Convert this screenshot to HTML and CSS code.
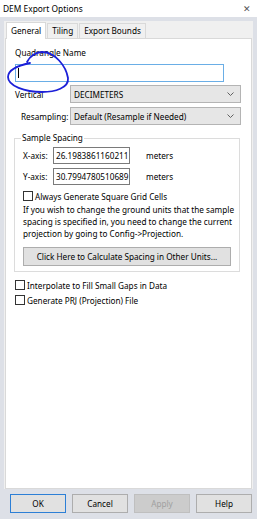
FILE: index.html
```html
<!doctype html>
<html lang="en">
    <head>
        <meta charset="UTF-8" />
        <title>DEM Export Options</title>
        <link rel="stylesheet" href="styles.css">
    </head>
    <body>
        <div class="window">
            <!-- Title bar -->
            <div class="titlebar">
                <span class="title">DEM Export Options</span>
                <span class="close">&#x2715;</span>
            </div>

            <div class="dialog">
                <div class="tabctl">
                    <div class="tabs">
                        <div class="tab active">General</div>
                        <div class="tab">Tiling</div>
                        <div class="tab">Export Bounds</div>
                    </div>

                    <div class="panel">
                        <div class="field-label">Quadrangle Name</div>
                        <div class="textbox focused"><span class="caret"></span></div>

                        <div class="row">
                            <span class="row-label">Vertical</span>
                            <div class="combo">
                                <span>DECIMETERS</span>
                                <svg class="chev" width="7" height="4" viewBox="0 0 7 4"><path d="M0.5 0.5 L3.5 3.5 L6.5 0.5" fill="none" stroke="#606060" stroke-width="1"/></svg>
                            </div>
                        </div>

                        <div class="row second">
                            <span class="row-label indent">Resampling:</span>
                            <div class="combo">
                                <span>Default (Resample if Needed)</span>
                                <svg class="chev" width="7" height="4" viewBox="0 0 7 4"><path d="M0.5 0.5 L3.5 3.5 L6.5 0.5" fill="none" stroke="#606060" stroke-width="1"/></svg>
                            </div>
                        </div>

                        <!-- Sample spacing group -->
                        <fieldset class="group">
                            <legend>Sample Spacing</legend>
                            <div class="axis-row">
                                <span class="axis-label">X-axis:</span>
                                <div class="numbox">26.1983861160211</div>
                                <span class="unit">meters</span>
                            </div>
                            <div class="axis-row">
                                <span class="axis-label">Y-axis:</span>
                                <div class="numbox">30.7994780510689</div>
                                <span class="unit">meters</span>
                            </div>
                            <div class="check square"><span class="box"></span>Always Generate Square Grid Cells</div>
                            <p class="note">If you wish to change the ground units that the sample spacing is specified in, you need to change the current projection by going to Config-&gt;Projection.</p>
                            <div class="btn wide">Click Here to Calculate Spacing in Other Units...</div>
                        </fieldset>

                        <div class="check outer first"><span class="box"></span>Interpolate to Fill Small Gaps in Data</div>
                        <div class="check outer"><span class="box"></span>Generate PRJ (Projection) File</div>
                    </div>
                </div>

                <!-- Dialog buttons -->
                <div class="buttons">
                    <div class="btn default">OK</div>
                    <div class="btn">Cancel</div>
                    <div class="btn disabled">Apply</div>
                    <div class="btn">Help</div>
                </div>
            </div>

            <!-- hand-drawn ink mark -->
            <svg class="ink" width="80" height="100" viewBox="0 0 80 100">
                <path d="M27 62 C30 56 36 52 42 52 C55 52 66 66 68 78 C69 88 55 92 42 92 C25 92 8 86 8 77 C8 70 16 66 30 63" fill="none" stroke="#1c20d8" stroke-width="1.8" stroke-linecap="round"/>
            </svg>
        </div>
    </body>
</html>
```

FILE: styles.css
```css
body {
    margin: 0;
    padding: 0;
    font-family: "Noto Sans", Arial, sans-serif;
    font-size: 8.2px;
    color: #000;
    background-color: #dde0e7;
}

.window {
    position: relative;
    width: 257px;
    height: 519px;
    overflow: hidden;
}

/* Title bar */
.titlebar {
    height: 17px;
    background-color: #fff;
    display: flex;
    align-items: center;
    justify-content: space-between;
    padding: 0 6px 0 3px;
}

.title {
    font-size: 8.4px;
}

.close {
    font-size: 9px;
    color: #555;
}

.dialog {
    padding: 4px 4px 0 4px;
}

/* Tab control */
.tabctl {
    background-color: #f0f0f0;
    padding: 0 1px;
    height: 468px;
    display: flex;
    flex-direction: column;
}

.tabs {
    display: flex;
    height: 17px;
    align-items: flex-end;
    padding-left: 1px;
}

.tab {
    height: 14px;
    line-height: 14px;
    padding: 0 4px;
    border: 1px solid #d9d9d9;
    border-bottom: none;
    background-color: #f0f0f0;
    margin-right: 1px;
}

.tab.active {
    height: 16px;
    line-height: 15px;
    background-color: #fff;
    position: relative;
    top: 1px;
}

.panel {
    flex: 1;
    background-color: #fff;
    border: 1px solid #d9d9d9;
    padding: 8px 0 0 9px;
}

.field-label {
    height: 12px;
    line-height: 12px;
}

.textbox {
    width: 207px;
    height: 16px;
    border: 1px solid #aaa;
    margin-top: 5px;
    position: relative;
}

.textbox.focused {
    border-color: #6aaee6;
}

.caret {
    position: absolute;
    left: 2px;
    top: 3px;
    width: 1px;
    height: 10px;
    background-color: #000;
}

.row {
    display: flex;
    align-items: center;
    margin-top: 3px;
}

.row.second {
    margin-top: 4px;
}

.row-label {
    width: 55px;
    white-space: nowrap;
}

.row-label.indent {
    padding-left: 6px;
    width: 49px;
}

.combo {
    width: 160px;
    height: 16px;
    border: 1px solid #b4b4b4;
    background-color: #e6e6e6;
    display: flex;
    align-items: center;
    justify-content: space-between;
    padding: 0 6px 0 3px;
}

/* Group box */
.group {
    width: 208px;
    margin: 7px 0 0 -1px;
    border: 1px solid #dcdcdc;
    padding: 3px 8px 5px 8px;
}

.group legend {
    padding: 0 1px;
    margin-left: -2px;
    line-height: 12px;
}

.axis-row {
    display: flex;
    align-items: center;
    margin-bottom: 4px;
}

.axis-label {
    width: 30px;
}

.numbox {
    width: 73px;
    height: 15px;
    line-height: 15px;
    border: 1px solid #7a7a7a;
    padding-left: 2px;
    margin-right: 16px;
}

.check {
    display: flex;
    align-items: center;
    height: 14px;
}

.check.square {
    margin-top: 1px;
}

.box {
    width: 8px;
    height: 8px;
    border: 1px solid #333;
    background-color: #fff;
    margin-right: 2px;
}

.note {
    margin: 1px -6px 0 0;
    line-height: 12px;
}

.btn {
    height: 17px;
    line-height: 17px;
    text-align: center;
    background-color: #e1e1e1;
    border: 1px solid #adadad;
}

.btn.wide {
    margin-top: 7px;
}

.check.outer {
    margin-top: 1px;
}

.check.outer.first {
    margin-top: 6px;
}

/* Bottom buttons */
.buttons {
    display: flex;
    gap: 6px;
    padding: 5px 0 0 6px;
}

.buttons .btn {
    width: 54px;
}

.btn.default {
    border-color: #2c7fd6;
}

.btn.disabled {
    background-color: #cccccc;
    border-color: #bfbfbf;
    color: #a0a0a0;
}

.ink {
    position: absolute;
    left: 0;
    top: 0;
}
```
